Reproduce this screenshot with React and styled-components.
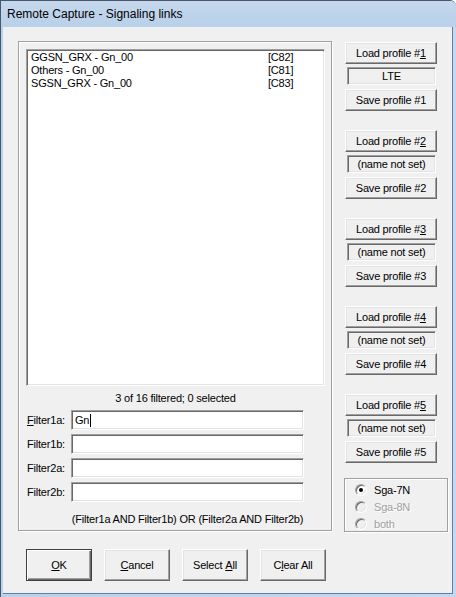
import React from "react";
import styled, { createGlobalStyle, css } from "styled-components";

const Global = createGlobalStyle`
  html, body { margin: 0; padding: 0; background: #ffffff; }
  body { font-family: "Liberation Sans", Arial, sans-serif; }
  * { box-sizing: border-box; }
`;

const Window = styled.div`
  width: 456px;
  height: 597px;
  display: flex;
  flex-direction: column;
  background: linear-gradient(to right, #b9d1ea, #c4d9ef);
  border-left: 1px solid #46566c;
  border-top: 1px solid #46566c;
  border-top-right-radius: 6px;
  overflow: hidden;
`;

const TitleBar = styled.div`
  height: 26px;
  flex: none;
  display: flex;
  align-items: center;
  padding-left: 6px;
  font-size: 12px;
  color: #000;
  background: linear-gradient(to bottom, #c7d8ec 0%, #bcd2ea 60%, #b9d1ea 100%);
`;

const Client = styled.div`
  flex: 1;
  margin: 0 3px 3px 2px;
  background: #f0f0f0;
  border-right: 1px solid #5f7fa6;
  border-bottom: 1px solid #5f7fa6;
  padding: 14px 0 0 15px;
  display: flex;
  flex-direction: column;
  font-size: 11px;
  letter-spacing: -0.2px;
  color: #000;
`;

const MainRow = styled.div`
  display: flex;
  align-items: flex-start;
  gap: 13px;
`;

const etched = css`
  border: 1px solid #a0a0a0;
  box-shadow: inset 1px 1px 0 #ffffff, 1px 1px 0 #ffffff;
`;

const sunken = css`
  border: 1px solid;
  border-color: #a0a0a0 #ffffff #ffffff #a0a0a0;
  box-shadow: inset 1px 1px 0 #696969, inset -1px -1px 0 #e3e3e3;
`;

const Group = styled.div`
  ${etched};
  width: 314px;
  height: 490px;
  padding: 7px 0 0 7px;
  display: flex;
  flex-direction: column;
`;

const ListBox = styled.div`
  ${sunken};
  width: 299px;
  height: 337px;
  background: #ffffff;
  padding: 1px 4px 0 4px;
`;

const ListRow = styled.div`
  display: grid;
  grid-template-columns: 237px auto;
  height: 13px;
  line-height: 13px;
  white-space: nowrap;
`;

const Status = styled.div`
  width: 299px;
  margin-top: 5px;
  line-height: 14px;
  text-align: center;
`;

const Filters = styled.div`
  margin-top: 5px;
  display: flex;
  flex-direction: column;
  gap: 4px;
`;

const FilterRow = styled.div`
  display: flex;
  align-items: center;
  height: 20px;
`;

const FilterLabel = styled.div`
  width: 45px;
  padding-left: 1px;
`;

const TextInput = styled.div`
  ${sunken};
  width: 233px;
  height: 20px;
  background: #ffffff;
  padding-left: 3px;
  display: flex;
  align-items: center;
  font-size: 11px;
`;

const Caret = styled.span`
  display: inline-block;
  width: 1px;
  height: 13px;
  background: #000;
  margin-left: 1px;
`;

const Formula = styled.div`
  margin-top: 10px;
  margin-left: 45px;
  width: 233px;
  text-align: center;
  line-height: 14px;
`;

const RightColumn = styled.div`
  width: 104px;
  margin-top: 1px;
  display: flex;
  flex-direction: column;
`;

const Profiles = styled.div`
  display: flex;
  flex-direction: column;
  gap: 19px;
`;

const Profile = styled.div`
  display: flex;
  flex-direction: column;
  align-items: flex-start;
`;

const Button = styled.div`
  width: ${(p) => p.$w || 92}px;
  height: ${(p) => p.$h || 22}px;
  background: #f0f0f0;
  display: flex;
  align-items: center;
  justify-content: center;
  white-space: nowrap;
  border: 1px solid;
  border-color: #ffffff #696969 #696969 #ffffff;
  box-shadow: inset -1px -1px 0 #a0a0a0, inset 1px 1px 0 #e3e3e3;
  ${(p) =>
    p.$default &&
    css`
      border-color: #404040;
      box-shadow: inset 1px 1px 0 #ffffff, inset -1px -1px 0 #696969,
        inset -2px -2px 0 #a0a0a0;
    `}
`;

const NameField = styled.div`
  ${sunken};
  width: 89px;
  height: 18px;
  margin: 3px 0 4px 2px;
  background: #f0f0f0;
  display: flex;
  align-items: center;
  justify-content: center;
  white-space: nowrap;
`;

const RadioBox = styled.div`
  ${etched};
  margin-top: 15px;
  margin-left: -1px;
  width: 104px;
  height: 54px;
  padding: 2px 0 0 10px;
`;

const RadioRow = styled.div`
  height: 17px;
  display: flex;
  align-items: center;
  gap: 7px;
  color: ${(p) => (p.$disabled ? "#a0a0a0" : "#000")};
  text-shadow: ${(p) => (p.$disabled ? "1px 1px 0 #ffffff" : "none")};
`;

const RadioCircle = styled.span`
  width: 12px;
  height: 12px;
  flex: none;
  border-radius: 50%;
  background: ${(p) => (p.$disabled ? "#f0f0f0" : "#ffffff")};
  border: 1px solid;
  border-color: #a0a0a0 #ffffff #ffffff #a0a0a0;
  box-shadow: inset 1px 1px 0 #696969, inset -1px -1px 0 #e3e3e3;
  display: flex;
  align-items: center;
  justify-content: center;
  &::after {
    content: "";
    width: 4px;
    height: 4px;
    border-radius: 50%;
    background: ${(p) => (p.$checked ? "#000" : "transparent")};
  }
`;

const BottomRow = styled.div`
  margin-top: 17px;
  margin-left: 8px;
  display: flex;
  gap: 12px;
`;

const items = [
  ["GGSN_GRX - Gn_00", "[C82]"],
  ["Others - Gn_00", "[C81]"],
  ["SGSN_GRX - Gn_00", "[C83]"],
];

const profiles = [
  { n: "1", name: "LTE" },
  { n: "2", name: "(name not set)" },
  { n: "3", name: "(name not set)" },
  { n: "4", name: "(name not set)" },
  { n: "5", name: "(name not set)" },
];

export default function App() {
  return (
    <>
      <Global />
      <Window>
        <TitleBar>Remote Capture - Signaling links</TitleBar>
        <Client>
          <MainRow>
            <Group>
              <ListBox>
                {items.map(([a, b]) => (
                  <ListRow key={a}>
                    <span>{a}</span>
                    <span>{b}</span>
                  </ListRow>
                ))}
              </ListBox>
              <Status>3 of 16 filtered; 0 selected</Status>
              <Filters>
                <FilterRow>
                  <FilterLabel>
                    <u>F</u>ilter1a:
                  </FilterLabel>
                  <TextInput>
                    Gn<Caret />
                  </TextInput>
                </FilterRow>
                <FilterRow>
                  <FilterLabel>Filter1b:</FilterLabel>
                  <TextInput />
                </FilterRow>
                <FilterRow>
                  <FilterLabel>Filter2a:</FilterLabel>
                  <TextInput />
                </FilterRow>
                <FilterRow>
                  <FilterLabel>Filter2b:</FilterLabel>
                  <TextInput />
                </FilterRow>
              </Filters>
              <Formula>(Filter1a AND Filter1b) OR (Filter2a AND Filter2b)</Formula>
            </Group>
            <RightColumn>
              <Profiles>
                {profiles.map((p) => (
                  <Profile key={p.n}>
                    <Button>
                      Load profile #<u>{p.n}</u>
                    </Button>
                    <NameField>{p.name}</NameField>
                    <Button>Save profile #{p.n}</Button>
                  </Profile>
                ))}
              </Profiles>
              <RadioBox>
                <RadioRow>
                  <RadioCircle $checked />
                  Sga-7N
                </RadioRow>
                <RadioRow $disabled>
                  <RadioCircle $disabled />
                  Sga-8N
                </RadioRow>
                <RadioRow $disabled>
                  <RadioCircle $disabled />
                  both
                </RadioRow>
              </RadioBox>
            </RightColumn>
          </MainRow>
          <BottomRow>
            <Button $w={66} $h={32} $default>
              <u>O</u>K
            </Button>
            <Button $w={66} $h={32}>
              <u>C</u>ancel
            </Button>
            <Button $w={66} $h={32}>
              Select&nbsp;<u>A</u>ll
            </Button>
            <Button $w={66} $h={32}>
              C<u>l</u>ear All
            </Button>
          </BottomRow>
        </Client>
      </Window>
    </>
  );
}
